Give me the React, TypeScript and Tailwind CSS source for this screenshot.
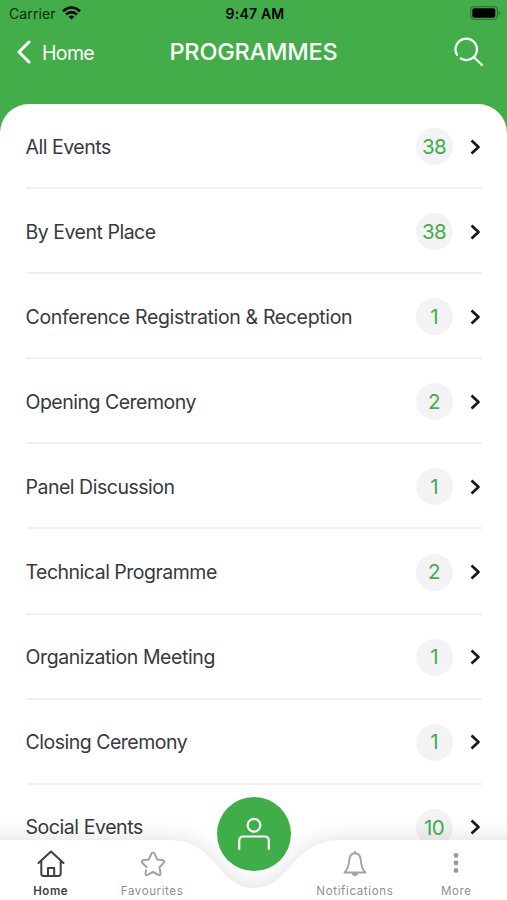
const rows = [
  { label: 'All Events', count: 38, tracking: 'tracking-[-0.48px]' },
  { label: 'By Event Place', count: 38, tracking: 'tracking-[-0.48px]' },
  { label: 'Conference Registration & Reception', count: 1, tracking: 'tracking-[-0.35px]' },
  { label: 'Opening Ceremony', count: 2, tracking: 'tracking-[-0.5px]' },
  { label: 'Panel Discussion', count: 1, tracking: 'tracking-[-0.48px]' },
  { label: 'Technical Programme', count: 2, tracking: 'tracking-[-0.5px]' },
  { label: 'Organization Meeting', count: 1, tracking: 'tracking-[-0.4px]' },
  { label: 'Closing Ceremony', count: 1, tracking: 'tracking-[-0.5px]' },
  { label: 'Social Events', count: 10, tracking: 'tracking-[-0.43px]' },
];

function StatusBar() {
  return (
    <div className="grid h-7 grid-cols-3 items-center pr-[6px] pl-[9px] text-[14px] leading-none text-[#0a2a0c]">
      <div className="flex items-center gap-[6px]">
        <span className="tracking-[0.1px]">Carrier</span>
        <svg className="-mt-[2px]" width="19" height="14" viewBox="0 0 19 14" fill="none" stroke="#000" strokeWidth="2.6">
          <path d="M1 5.2Q9.5-2.2 18 5.2" />
          <path d="M4 8.5Q9.5 3.7 15 8.5" />
          <path d="M6.6 10.6Q9.5 8.3 12.4 10.6L9.5 13.6Z" fill="#000" stroke="none" />
        </svg>
      </div>
      <span className="text-center text-[14px] font-semibold tracking-[0.2px] whitespace-nowrap text-black">9:47 AM</span>
      <svg className="-mt-[2px] justify-self-end" width="31" height="14" viewBox="0 0 31 14">
        <rect x="0.7" y="0.7" width="26.6" height="12.6" rx="3.5" fill="none" stroke="#2b7a30" strokeWidth="1.2" />
        <rect x="2.3" y="2.3" width="23" height="9.4" rx="2" fill="#000" />
        <path d="M28.5 4.7Q30.5 5.5 30.5 7T28.5 9.3Z" fill="#2b7a30" />
      </svg>
    </div>
  );
}

function Header() {
  return (
    <header className="h-[103.5px] shrink-0 bg-[#43ae49]">
      <StatusBar />
      <div className="grid h-[48px] grid-cols-[1fr_auto_1fr] items-center px-[17px] text-white">
        <div className="flex items-center gap-[11px]">
          <svg width="14" height="24" viewBox="0 0 14 24" fill="none" stroke="currentColor" strokeWidth="3" strokeLinecap="round" strokeLinejoin="round">
            <path d="M12 2L2 12L12 22" />
          </svg>
          <span className="pt-[2px] text-[19.5px] leading-6 tracking-[-0.65px]">Home</span>
        </div>
        <h1 className="text-[23.5px] leading-7 font-medium tracking-[-0.2px]">PROGRAMMES</h1>
        <svg className="mr-[6px] justify-self-end" width="30" height="30" viewBox="0 0 30 30" fill="none" stroke="currentColor" strokeWidth="2.2" strokeLinecap="round">
          <path d="M3.1 17.9A10.7 10.7 0 1 1 6.7 21.5M20.2 20.5L28 28" />
        </svg>
      </div>
    </header>
  );
}

function Row({ label, count, tracking }: { label: string; count: number; tracking: string }) {
  return (
    <li className="flex h-[85.1px] shrink-0 items-center border-b-2 border-[#f0f0f0] pt-[2px] pr-[1px] text-[#36393d] last:border-transparent">
      <span className={`flex-1 text-[19.5px] leading-6 whitespace-nowrap ${tracking}`}>{label}</span>
      <span className="mr-[17px] flex h-[37px] w-[37px] items-center justify-center rounded-full bg-[#f3f3f6] pt-px text-[20.5px] leading-none tracking-[-0.6px] text-[#43ae49]">
        {count}
      </span>
      <svg width="11" height="16" viewBox="0 0 11 16" fill="none" stroke="#17191c" strokeWidth="2.7" strokeLinejoin="round">
        <path d="M1.5 1.5L8.5 8L1.5 14.5" />
      </svg>
    </li>
  );
}

function TabBar() {
  return (
    <nav className="absolute inset-x-0 bottom-0 h-[104px]">
      <svg className="absolute inset-0" width="507" height="104" viewBox="0 0 507 104" overflow="visible">
        <defs>
          <filter id="lift" x="-10%" y="-60%" width="120%" height="200%">
            <feGaussianBlur stdDeviation="12" />
          </filter>
        </defs>
        <path d="M-30 44H168C192 44 202 53 214 66C226 80 236 92 254 92C272 92 282 80 294 66C306 53 320 44 342 44H537V150H-30Z" fill="#000" opacity="0.13" filter="url(#lift)" />
        <path d="M0 44H168C192 44 202 53 214 66C226 80 236 92 254 92C272 92 282 80 294 66C306 53 320 44 342 44H507V104H0Z" fill="#fff" />
      </svg>
      <div className="relative grid h-full grid-cols-5 items-end pb-[2px] text-center text-[11.5px] leading-[14px] text-[#8e8e93]">
        <div className="flex flex-col items-center gap-[6px] font-semibold text-[#3d4044]">
          <svg width="28" height="28" viewBox="0 0 28 28" fill="none" stroke="currentColor" strokeWidth="2" strokeLinecap="round" strokeLinejoin="round">
            <path d="M1.5 13L14 1.5L26.5 13M4.3 11V23.5Q4.3 26 6.8 26H21.2Q23.7 26 23.7 23.5V11M11 25.5V18H17.2V25.5" />
          </svg>
          <span className="tracking-[0.6px]">Home</span>
        </div>
        <div className="flex flex-col items-center gap-[6px]">
          <svg className="ml-px" width="26" height="28" viewBox="0 0 26 28" fill="none" stroke="#a3a3a3" strokeWidth="2" strokeLinecap="round" strokeLinejoin="round">
            <path d="M6 20.3L5.5 23.3Q5.3 25.8 7.6 24.9L13 22L18.4 24.9Q20.7 25.8 20.5 23.3L19.4 17.4L23.6 13Q25.3 11 22.8 10.3L17.2 9.4L14.6 3.8Q13 1.4 11.4 3.8L8.8 9.4L3.2 10.3Q.7 11 2.4 13L6.4 17" />
          </svg>
          <span className="tracking-[0.6px]">Favourites</span>
        </div>
        <div />
        <div className="flex flex-col items-center gap-[6px]">
          <svg width="26" height="28" viewBox="0 0 26 28" fill="none" stroke="#a3a3a3" strokeWidth="1.9" strokeLinecap="round" strokeLinejoin="round">
            <path d="M13 1.7V3M2.5 22.5C5.5 19.5 6.8 16 7.2 10.5C7.5 6 9.7 3.2 13 3.2S18.5 6 18.8 10.5C19.2 16 20.5 19.5 23.5 22.5Z" />
            <path d="M10.2 24Q13 28 15.8 24Z" fill="#a3a3a3" strokeWidth="1" />
          </svg>
          <span className="tracking-[0.65px] whitespace-nowrap">Notifications</span>
        </div>
        <div className="flex flex-col items-center gap-[6px]">
          <svg width="6" height="28" viewBox="0 0 6 28" fill="#99999c">
            <circle cx="3" cy="5.5" r="2.4" />
            <circle cx="3" cy="13" r="2.4" />
            <circle cx="3" cy="20.5" r="2.4" />
          </svg>
          <span className="tracking-[0.6px]">More</span>
        </div>
      </div>
      <button className="absolute top-[1px] left-[217px] flex h-[74px] w-[74px] items-center justify-center rounded-full bg-[#3fae49]">
        <svg width="34" height="34" viewBox="0 0 34 34" fill="none" stroke="#fff" strokeWidth="2.2" strokeLinecap="round">
          <circle cx="17" cy="8.3" r="6.4" />
          <path d="M2.2 32V24Q2.2 19.5 6.4 19.5H27.6Q31.8 19.5 31.8 24V32" />
        </svg>
      </button>
    </nav>
  );
}

export default function App() {
  return (
    <div className="relative flex h-[900px] w-[507px] flex-col overflow-hidden bg-[#43ae49] font-['Inter','Liberation_Sans',sans-serif]">
      <Header />
      <main className="flex-1 overflow-hidden rounded-t-[29px] bg-white">
        <ul className="flex flex-col px-[25.5px] pt-[0.5px]">
          {rows.map((row) => (
            <Row key={row.label} {...row} />
          ))}
        </ul>
      </main>
      <TabBar />
    </div>
  );
}
